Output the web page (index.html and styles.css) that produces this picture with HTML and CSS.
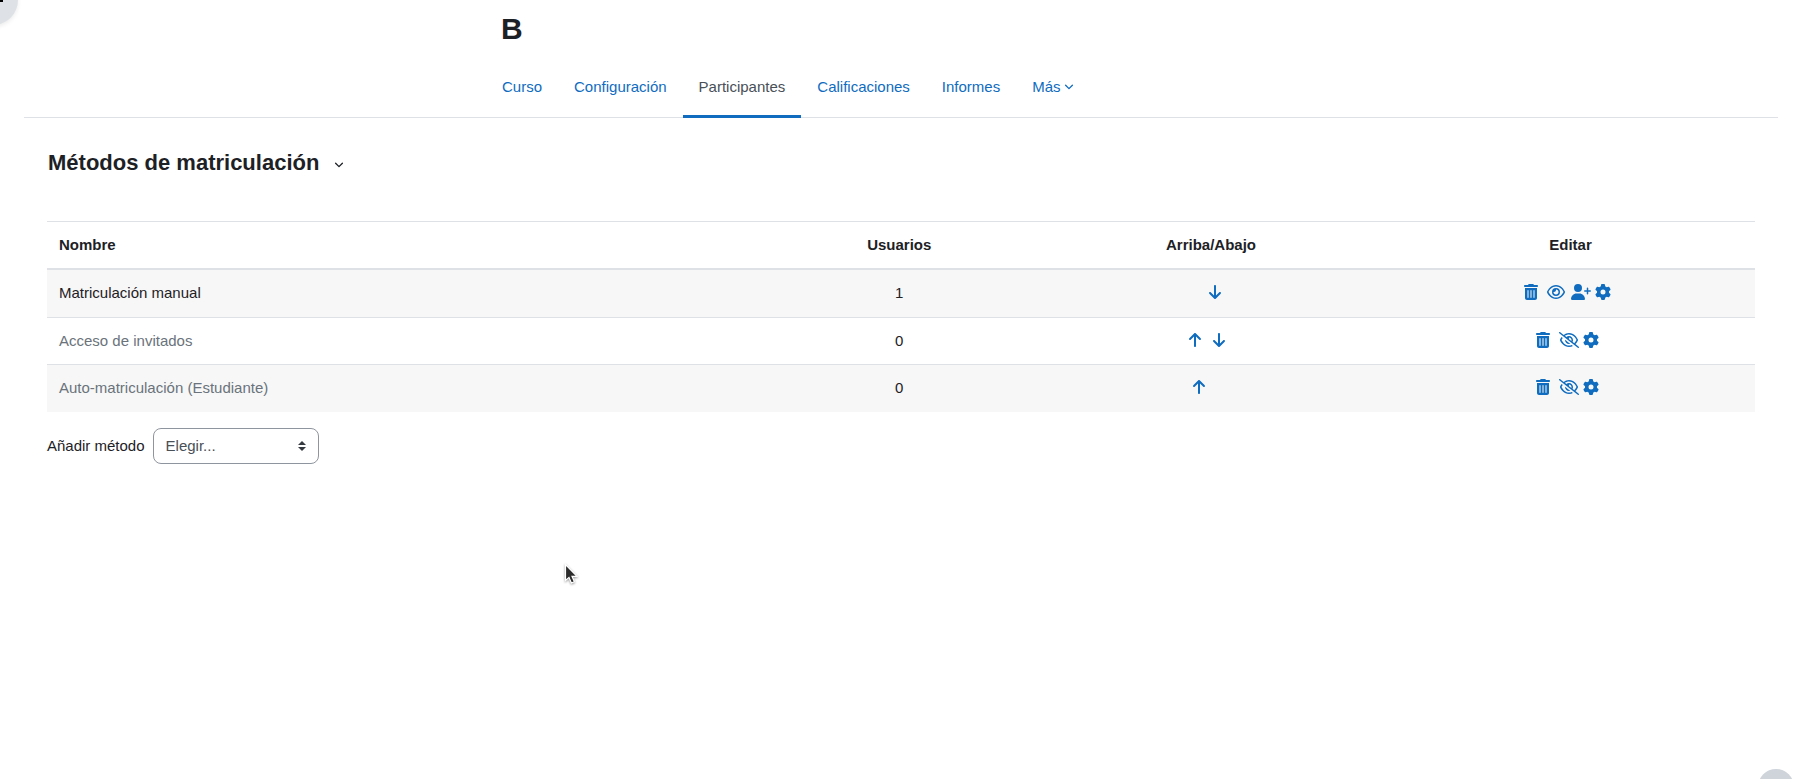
FILE: index.html
```html
<!DOCTYPE html>
<html lang="es">
<head>
<meta charset="utf-8">
<meta name="viewport" content="width=device-width, initial-scale=1">
<title>B: Métodos de matriculación</title>
<link rel="stylesheet" href="styles.css">
</head>
<body>
<svg class="sprite" aria-hidden="true">
  <symbol id="trash" viewBox="0 0 448 512"><path d="M135.2 17.7C140.6 6.8 151.7 0 163.8 0H284.2c12.1 0 23.2 6.8 28.6 17.7L320 32h96c17.7 0 32 14.3 32 32s-14.3 32-32 32H32C14.3 96 0 81.7 0 64S14.3 32 32 32h96l7.2-14.3zM32 128H416V448c0 35.3-28.7 64-64 64H96c-35.3 0-64-28.7-64-64V128zm96 64c-8.800 0-16 7.200-16 16V432c0 8.800 7.200 16 16 16s16-7.200 16-16V208c0-8.800-7.200-16-16-16zm96 0c-8.800 0-16 7.200-16 16V432c0 8.800 7.200 16 16 16s16-7.200 16-16V208c0-8.800-7.200-16-16-16zm96 0c-8.800 0-16 7.200-16 16V432c0 8.800 7.200 16 16 16s16-7.200 16-16V208c0-8.800-7.200-16-16-16z"/></symbol>
  <symbol id="gear" viewBox="0 0 512 512"><path d="M495.9 166.6c3.2 8.7 .5 18.4-6.4 24.6l-43.3 39.4c1.1 8.3 1.7 16.8 1.7 25.4s-.6 17.1-1.7 25.4l43.3 39.4c6.9 6.2 9.6 15.9 6.4 24.6c-4.4 11.9-9.7 23.3-15.8 34.3l-4.7 8.1c-6.6 11-14 21.4-22.1 31.2c-5.9 7.2-15.7 9.6-24.5 6.8l-55.7-17.7c-13.4 10.3-28.2 18.9-44 25.4l-12.5 57.1c-2 9.1-9 16.3-18.2 17.8c-13.8 2.3-28 3.5-42.5 3.5s-28.7-1.2-42.5-3.5c-9.2-1.5-16.2-8.7-18.2-17.8l-12.5-57.1c-15.8-6.5-30.6-15.1-44-25.4L83.100 425.900c-8.800 2.800-18.600 .3-24.500-6.800c-8.100-9.800-15.500-20.200-22.100-31.200l-4.700-8.100c-6.100-11-11.400-22.400-15.800-34.300c-3.200-8.700-.5-18.400 6.400-24.600l43.300-39.400C64.600 273.100 64 264.600 64 256s.6-17.100 1.700-25.400L22.400 191.200c-6.900-6.200-9.600-15.900-6.400-24.600c4.400-11.900 9.700-23.300 15.800-34.300l4.700-8.100c6.600-11 14-21.400 22.100-31.200c5.900-7.200 15.700-9.600 24.500-6.800l55.700 17.700c13.400-10.300 28.200-18.900 44-25.400l12.500-57.100c2-9.100 9-16.300 18.200-17.800C227.300 1.200 241.500 0 256 0s28.700 1.200 42.500 3.500c9.200 1.500 16.200 8.700 18.200 17.800l12.500 57.100c15.800 6.500 30.600 15.100 44 25.400l55.700-17.700c8.800-2.800 18.600-.3 24.500 6.800c8.100 9.800 15.500 20.200 22.100 31.200l4.700 8.100c6.100 11 11.400 22.400 15.800 34.300zM256 336a80 80 0 1 0 0-160 80 80 0 1 0 0 160z"/></symbol>
  <symbol id="user-plus" viewBox="0 0 640 512"><path d="M96 128a128 128 0 1 1 256 0A128 128 0 1 1 96 128zM0 482.3C0 383.8 79.8 304 178.3 304h91.4C368.2 304 448 383.8 448 482.3c0 16.4-13.3 29.7-29.7 29.7H29.7C13.3 512 0 498.7 0 482.3zM504 312V248H440c-13.3 0-24-10.7-24-24s10.7-24 24-24h64V136c0-13.3 10.7-24 24-24s24 10.7 24 24v64h64c13.3 0 24 10.7 24 24s-10.7 24-24 24H552v64c0 13.3-10.7 24-24 24s-24-10.7-24-24z"/></symbol>
  <symbol id="eye" viewBox="0 0 576 512"><path d="M288 80c-65.2 0-118.8 29.6-159.9 67.7C89.6 183.5 63 226 49.4 256c13.6 30 40.2 72.5 78.6 108.3C169.2 402.4 222.8 432 288 432s118.8-29.6 159.9-67.7C486.4 328.5 513 286 526.6 256c-13.6-30-40.2-72.5-78.6-108.3C406.8 109.6 353.2 80 288 80zM95.4 112.6C142.5 68.8 207.2 32 288 32s145.5 36.8 192.6 80.6c46.8 43.5 78.1 95.4 93 131.1c3.3 7.9 3.3 16.7 0 24.6c-14.9 35.7-46.2 87.7-93 131.1C433.5 443.2 368.8 480 288 480s-145.5-36.8-192.6-80.6C48.6 356 17.3 304 2.5 268.3c-3.3-7.9-3.3-16.7 0-24.6C17.3 208 48.6 156 95.4 112.6zM288 336c44.2 0 80-35.8 80-80s-35.8-80-80-80c-.7 0-1.3 0-2 0c1.3 5.1 2 10.5 2 16c0 35.3-28.7 64-64 64c-5.5 0-10.9-.7-16-2c0 .7 0 1.3 0 2c0 44.2 35.8 80 80 80zm0-208a128 128 0 1 1 0 256 128 128 0 1 1 0-256z"/></symbol>
  <symbol id="eye-slash" viewBox="0 0 640 512"><path d="M38.8 5.1C28.4-3.1 13.3-1.2 5.1 9.2S-1.2 34.7 9.2 42.9l592 464c10.4 8.2 25.5 6.3 33.7-4.1s6.3-25.5-4.1-33.7L525.6 386.7c39.6-40.6 66.4-86.1 79.9-118.4c3.3-7.9 3.3-16.7 0-24.6c-14.9-35.7-46.2-87.7-93-131.1C465.5 68.8 400.8 32 320 32c-68.2 0-125 26.3-169.3 60.8L38.8 5.1zm151 118.3C226 97.7 269.5 80 320 80c65.2 0 118.8 29.6 159.9 67.7C518.4 183.5 545 226 558.6 256c-12.6 28-36.6 66.8-70.9 100.9l-53.8-42.2c9.1-17.6 14.2-37.5 14.2-58.7c0-70.7-57.3-128-128-128c-32.2 0-61.7 11.9-84.2 31.5l-46.1-36.1zM394.9 284.2l-81.5-63.9c4.2-8.5 6.6-18.2 6.6-28.3c0-5.5-.7-10.9-2-16c.7 0 1.3 0 2 0c44.2 0 80 35.8 80 80c0 9.9-1.8 19.4-5.1 28.2zm9.4 130.3C378.8 425.4 350.7 432 320 432c-65.2 0-118.8-29.6-159.9-67.7C121.6 328.5 95 286 81.4 256c8.300-18.400 21.500-41.500 39.400-64.800L83.100 161.500C60.300 191.200 44 220.800 34.500 243.700c-3.300 7.900-3.300 16.700 0 24.600c14.900 35.700 46.200 87.700 93 131.100C174.500 443.200 239.200 480 320 480c47.800 0 89.900-12.900 126.200-32.500l-41.900-33zM192 256c0 70.700 57.300 128 128 128c13.300 0 26.100-2 38.200-5.800L302 334c-23.500-5.400-43.100-21.200-53.700-42.300l-56.100-44.200c-.2 2.800-.3 5.600-.3 8.500z"/></symbol>
  <symbol id="arrow-down" viewBox="0 0 384 512"><path d="M169.4 470.6c12.5 12.5 32.8 12.5 45.3 0l160-160c12.5-12.5 12.5-32.8 0-45.3s-32.8-12.5-45.3 0L224 370.8 224 64c0-17.7-14.3-32-32-32s-32 14.3-32 32l0 306.7L54.6 265.4c-12.5-12.5-32.8-12.5-45.3 0s-12.5 32.8 0 45.3l160 160z"/></symbol>
  <symbol id="arrow-up" viewBox="0 0 384 512"><path transform="matrix(1 0 0 -1 0 512)" d="M169.4 470.6c12.5 12.5 32.8 12.5 45.3 0l160-160c12.5-12.5 12.5-32.8 0-45.3s-32.8-12.5-45.3 0L224 370.8 224 64c0-17.7-14.3-32-32-32s-32 14.3-32 32l0 306.7L54.6 265.4c-12.5-12.5-32.8-12.5-45.3 0s-12.5 32.8 0 45.3l160 160z"/></symbol>
  <symbol id="chevron" viewBox="0 0 10 8"><path d="M1.600 2.200L5 5.600L8.400 2.200" fill="none" stroke="currentColor" stroke-width="1.300" stroke-linecap="round" stroke-linejoin="round"/></symbol>
</svg>

<button class="drawer-toggle" type="button" aria-label="Abrir cajón de bloques"><svg viewBox="0 0 20 4" aria-hidden="true"><path d="M0 0h20v4H0z"/></svg></button>

<header class="page-header">
  <div class="narrow">
    <h1 class="course-title">B</h1>
    <nav class="tabs" aria-label="Curso">
      <a class="tab" href="#">Curso</a>
      <a class="tab" href="#">Configuración</a>
      <a class="tab active" href="#" aria-current="page">Participantes</a>
      <a class="tab" href="#">Calificaciones</a>
      <a class="tab" href="#">Informes</a>
      <a class="tab" href="#">Más <svg class="chevron"><use href="#chevron"/></svg></a>
    </nav>
  </div>
</header>

<main class="content">
  <button class="heading-menu" type="button"><span class="heading">Métodos de matriculación</span><svg class="chevron"><use href="#chevron"/></svg></button>

  <table class="methods">
    <colgroup><col class="col-name"><col class="col-users"><col class="col-order"><col class="col-edit"></colgroup>
    <thead>
      <tr><th class="left" scope="col">Nombre</th><th scope="col">Usuarios</th><th scope="col">Arriba/Abajo</th><th scope="col">Editar</th></tr>
    </thead>
    <tbody>
      <tr>
        <td class="left">Matriculación manual</td>
        <td>1</td>
        <td><div class="actions"><span class="spacer"></span><a class="action" href="#" aria-label="Abajo"><svg class="icon"><use href="#arrow-down"/></svg></a></div></td>
        <td><div class="actions"><a class="action" href="#" aria-label="Borrar"><svg class="icon"><use href="#trash"/></svg></a><a class="action" href="#" aria-label="Deshabilitar"><svg class="icon icon-eye"><use href="#eye"/></svg></a><a class="action" href="#" aria-label="Matricular usuarios"><svg class="icon icon-wide"><use href="#user-plus"/></svg></a><a class="action" href="#" aria-label="Editar"><svg class="icon"><use href="#gear"/></svg></a></div></td>
      </tr>
      <tr>
        <td class="left dimmed">Acceso de invitados</td>
        <td>0</td>
        <td><div class="actions"><a class="action" href="#" aria-label="Arriba"><svg class="icon"><use href="#arrow-up"/></svg></a><a class="action" href="#" aria-label="Abajo"><svg class="icon"><use href="#arrow-down"/></svg></a></div></td>
        <td><div class="actions"><a class="action" href="#" aria-label="Borrar"><svg class="icon"><use href="#trash"/></svg></a><a class="action" href="#" aria-label="Habilitar"><svg class="icon icon-wide"><use href="#eye-slash"/></svg></a><a class="action" href="#" aria-label="Editar"><svg class="icon"><use href="#gear"/></svg></a></div></td>
      </tr>
      <tr>
        <td class="left dimmed">Auto-matriculación (Estudiante)</td>
        <td>0</td>
        <td><div class="actions"><a class="action" href="#" aria-label="Arriba"><svg class="icon"><use href="#arrow-up"/></svg></a><span class="spacer"></span></div></td>
        <td><div class="actions"><a class="action" href="#" aria-label="Borrar"><svg class="icon"><use href="#trash"/></svg></a><a class="action" href="#" aria-label="Habilitar"><svg class="icon icon-wide"><use href="#eye-slash"/></svg></a><a class="action" href="#" aria-label="Editar"><svg class="icon"><use href="#gear"/></svg></a></div></td>
      </tr>
    </tbody>
  </table>

  <form class="add-method">
    <label for="method">Añadir método</label>
    <div class="select-wrap">
      <select id="method" class="select"><option>Elegir...</option></select>
      <svg class="select-arrows" viewBox="0 0 8 10" aria-hidden="true"><path d="M0 4L4 0L8 4zM0 6L4 10L8 6z"/></svg>
    </div>
  </form>
</main>

<button class="help-button" type="button" aria-label="Ayuda"></button>

<svg class="pointer" viewBox="0 0 14 22" aria-hidden="true"><path d="M1.500 1.500V17.500L5 14.400L7.400 20L10.400 18.700L8 13.300H13Z" fill="#2b2b2b" stroke="#fff" stroke-width="1.200"/></svg>
</body>
</html>
```
FILE: styles.css
```css
* { box-sizing: border-box; }

body {
  margin: 0;
  padding: 0 22px 0 24px;
  min-height: 100vh;
  overflow: hidden;
  background: #fff;
  color: #1d2125;
  font-family: "Liberation Sans", Arial, sans-serif;
  font-size: 15px;
  line-height: 22px;
}

.sprite { position: absolute; width: 0; height: 0; }

a { color: #0f6cbf; text-decoration: none; }
button { font: inherit; color: inherit; border: 0; padding: 0; }

.drawer-toggle {
  position: absolute;
  top: -25px;
  left: -32px;
  width: 50px;
  height: 50px;
  border-radius: 50%;
  background: #dee2e6;
  box-shadow: 0 2px 4px rgba(0, 0, 0, .08);
}
.drawer-toggle svg { display: block; width: 20px; height: 4px; margin: 0 auto; }

.page-header { border-bottom: 1px solid #dee2e6; }
.narrow { max-width: 830px; margin: 0 auto; }

.course-title {
  margin: 0;
  padding: 11px 15px 0;
  font-size: 30px;
  line-height: 36px;
}

.tabs { display: flex; margin: 10px 0 -1px; }
.tab {
  display: flex;
  align-items: center;
  gap: 3px;
  height: 61px;
  padding: 1px 16px 0;
  border-bottom: 3px solid transparent;
}
.tab.active { color: #495057; border-bottom-color: #0f6cbf; }
.chevron { width: 10px; height: 8px; flex: none; }

.content { padding: 32px 23px; }

.heading-menu {
  display: flex;
  align-items: center;
  gap: 15px;
  padding-left: 1px;
  background: none;
}
.heading-menu .chevron { margin-top: 4px; }
.heading { font-size: 22px; font-weight: 700; line-height: 26px; }

.methods {
  width: 100%;
  margin-top: 45px;
  table-layout: fixed;
  border-collapse: separate;
  border-spacing: 0;
}
.col-name { width: 41.9%; }
.col-users { width: 16%; }
.col-order { width: 20.5%; }
.col-edit { width: 21.6%; }
.methods th, .methods td {
  padding: 12px;
  text-align: center;
  border-top: 1px solid #dee2e6;
}
.methods th { border-bottom: 2px solid #dee2e6; }
.methods tbody tr:first-child td { border-top: 0; padding-bottom: 13px; }
.methods tbody tr:last-child td { padding-bottom: 13px; }
.methods tbody tr:nth-child(odd) td { background: #f7f7f7; }
.methods .left { text-align: left; }
.methods .dimmed { color: #6a737b; }

.actions { display: flex; justify-content: center; height: 22px; padding-top: 2px; }
.action { display: block; width: 24px; height: 16px; }
.spacer { width: 16px; }
.icon { display: block; width: 16px; height: 16px; fill: #0f6cbf; }
.icon-eye { width: 18px; }
.icon-wide { width: 20px; }

.add-method { display: flex; align-items: center; gap: 8px; margin-top: 16px; }
.select-wrap { position: relative; }
.select {
  appearance: none;
  width: 166px;
  height: 36px;
  padding: 0 32px 0 12px;
  border: 1px solid #8f959e;
  border-radius: 8px;
  background: #fff;
  color: #495057;
  font: inherit;
}
.select-arrows {
  position: absolute;
  top: 13px;
  right: 13px;
  width: 8px;
  height: 10px;
  fill: #343a40;
  pointer-events: none;
}

.help-button {
  position: fixed;
  right: 6px;
  bottom: -26px;
  width: 36px;
  height: 36px;
  border-radius: 50%;
  background: #ced4da;
}

.pointer {
  position: absolute;
  top: 563px;
  left: 564px;
  width: 14px;
  height: 22px;
  filter: drop-shadow(0 1px 1px rgba(0, 0, 0, .4));
}
```
